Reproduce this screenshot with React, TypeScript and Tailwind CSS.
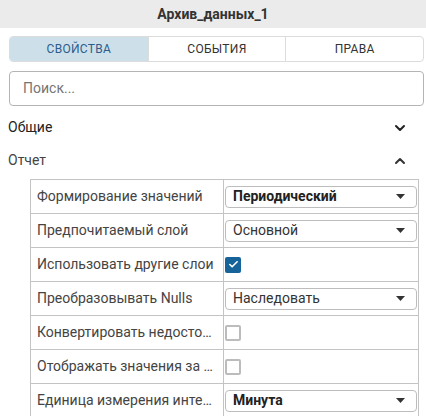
import React from "react";
import { ChevronDown, ChevronUp, Check } from "lucide-react";

type Row =
  | { label: string; kind: "select"; value: string; bold?: boolean }
  | { label: string; kind: "check"; checked: boolean };

const rows: Row[] = [
  { label: "Формирование значений", kind: "select", value: "Периодический", bold: true },
  { label: "Предпочитаемый слой", kind: "select", value: "Основной" },
  { label: "Использовать другие слои", kind: "check", checked: true },
  { label: "Преобразовывать Nulls", kind: "select", value: "Наследовать" },
  { label: "Конвертировать недостоверные значения", kind: "check", checked: false },
  { label: "Отображать значения за пределами", kind: "check", checked: false },
  { label: "Единица измерения интервала", kind: "select", value: "Минута", bold: true },
];

const tabs = ["Свойства", "События", "Права"];

const App = () => {
  return (
    <div className="w-[426px] h-[416px] overflow-hidden bg-white font-['Roboto',sans-serif]">
      {/* Header */}
      <div className="h-[28px] bg-[#ebebeb] flex items-center justify-center text-[14px] font-bold text-[#333]">
        Архив_данных_1
      </div>

      <div className="pl-[9px] pr-[2px]">
        {/* Tabs */}
        <div className="mt-[8px] h-[26px] grid grid-cols-3 border border-[#dcdcdc] rounded-[4px] overflow-hidden">
          {tabs.map((t, i) => (
            <div
              key={t}
              className={
                i === 0
                  ? "flex items-center justify-center bg-[#cde0ea] text-[#2c5d8c] text-[12px] uppercase tracking-[0.3px]"
                  : "flex items-center justify-center border-l border-[#dcdcdc] text-[#333] text-[12px] uppercase tracking-[0.3px]"
              }
            >
              {t}
            </div>
          ))}
        </div>

        {/* Search */}
        <div className="mt-[9px] h-[35px] border border-[#b4b4b4] rounded-[4px] flex items-center pl-[13px] text-[14px] text-[#757575]">
          Поиск...
        </div>

        {/* Sections */}
        <div className="mt-[5px] h-[33px] flex items-center justify-between pl-[-1px] pr-[16px] -ml-[1px] text-[14px] text-[#222]">
          <span>Общие</span>
          <ChevronDown size={16} strokeWidth={3} className="text-[#222]" />
        </div>
        <div className="h-[33px] flex items-center justify-between pr-[16px] -ml-[1px] text-[14px] text-[#444]">
          <span>Отчет</span>
          <ChevronUp size={16} strokeWidth={3} className="text-[#333]" />
        </div>

        {/* Table */}
        <div className="mt-[2px] ml-[21px] w-[389px] grid grid-cols-[193px_195px] border-l border-t border-[#c4c4c4] text-[14px] text-[#444]">
          {rows.map((r) => (
            <React.Fragment key={r.label}>
              <div className="h-[34px] border-r border-b border-[#c4c4c4] flex items-center pl-[6px] pr-[6px] min-w-0">
                <span className="truncate">{r.label}</span>
              </div>
              <div className="h-[34px] border-r border-b border-[#c4c4c4] flex items-center pl-[1px]">
                {r.kind === "select" ? (
                  <div className="w-[192px] h-[22px] border border-[#bdbdbd] rounded-[4px] flex items-center justify-between pl-[7px] pr-[11px]">
                    <span className={r.bold ? "font-bold text-[#222]" : "text-[#333]"}>{r.value}</span>
                    <svg width="9" height="5" viewBox="0 0 9 5">
                      <path d="M0 0h9L4.5 5z" fill="#333" />
                    </svg>
                  </div>
                ) : r.checked ? (
                  <div className="w-[16px] h-[16px] rounded-[2px] bg-[#16639a] flex items-center justify-center">
                    <Check size={11} strokeWidth={3.5} className="text-white" />
                  </div>
                ) : (
                  <div className="w-[16px] h-[16px] rounded-[2px] border-2 border-[#bcbcbc]" />
                )}
              </div>
            </React.Fragment>
          ))}
        </div>
      </div>
    </div>
  );
};

export default App;
